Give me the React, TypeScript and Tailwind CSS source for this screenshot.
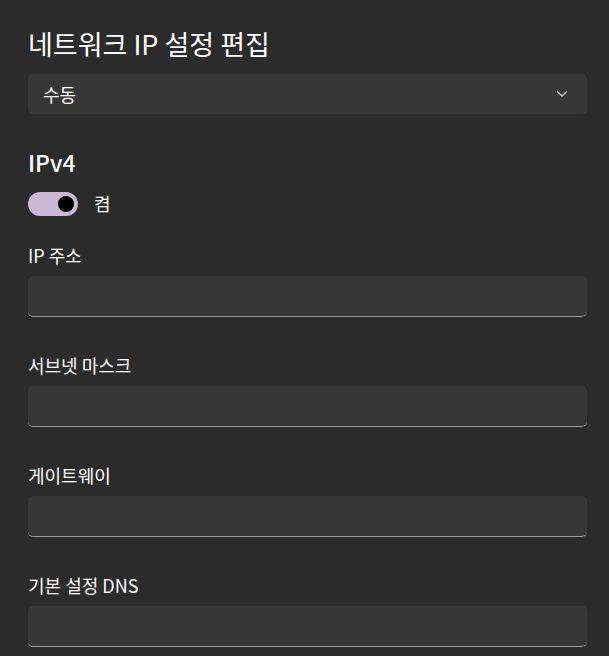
import React from 'react';

const font = { fontFamily: '"Noto Sans CJK KR", "Noto Sans", sans-serif' };

function Field({ label }: { label: string }) {
  return (
    <div className="flex flex-col">
      <div className="text-[18px] leading-[24px] text-[#ffffff] h-[24px]">{label}</div>
      <div className="mt-[9px] h-[41px] rounded-[5px] bg-[#373737] border-b border-[#9a9a9a]" />
    </div>
  );
}

export default function App() {
  return (
    <div className="min-h-[656px] w-full bg-[#2b2b2b] text-white pl-[28px] pr-[22px] pt-[25px]" style={font}>
      <h1 className="text-[27px] leading-[38px] font-normal">네트워크 IP 설정 편집</h1>
      <div className="mt-[11px] h-[40px] rounded-[5px] bg-[#373737] flex items-center justify-between pl-[15px] pr-[19px]">
        <span className="text-[18px]">수동</span>
        <svg width="12" height="8" viewBox="0 0 12 8" fill="none">
          <path d="M1.5 1.8 L6 6 L10.5 1.8" stroke="#d0d0d0" strokeWidth="1.3" strokeLinecap="round" strokeLinejoin="round" />
        </svg>
      </div>
      <h2 className="mt-[33px] text-[23px] leading-[30px] font-medium">IPv4</h2>
      <div className="mt-[13px] flex items-center gap-[16px]">
        <div className="w-[50px] h-[24px] rounded-full bg-[#cbb7d6] flex items-center justify-end pr-[4px]">
          <div className="w-[16px] h-[16px] rounded-full bg-black" />
        </div>
        <span className="text-[18px]">켬</span>
      </div>
      <div className="mt-[26px] flex flex-col gap-[36px]">
        <Field label="IP 주소" />
        <Field label="서브넷 마스크" />
        <Field label="게이트웨이" />
        <Field label="기본 설정 DNS" />
      </div>
    </div>
  );
}
